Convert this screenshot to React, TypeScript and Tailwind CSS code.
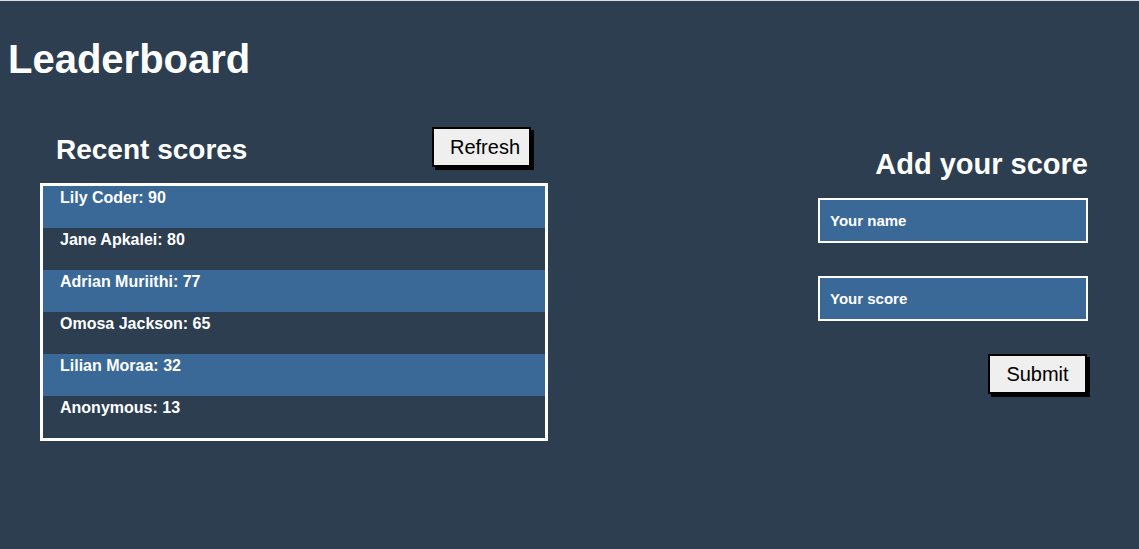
import React from 'react';

const scores = [
    { name: 'Lily Coder', score: 90 },
    { name: 'Jane Apkalei', score: 80 },
    { name: 'Adrian Muriithi', score: 77 },
    { name: 'Omosa Jackson', score: 65 },
    { name: 'Lilian Moraa', score: 32 },
    { name: 'Anonymous', score: 13 },
];

const font = { fontFamily: '"Liberation Sans", Arial, sans-serif' };

export default function App() {
    return (
        <div className="h-[549px] overflow-hidden bg-[#2c3e50] border-t border-[#dcdfe3] text-white" style={font}>
            <h1 className="ml-[8px] mt-[38px] text-[40px] leading-[40px] font-bold">Leaderboard</h1>

            <div className="mt-[48px] flex justify-between">
                {/* Recent scores */}
                <section className="ml-[40px] w-[508px]">
                    <div className="flex items-start justify-between pl-[16px] pr-[17px]">
                        <h2 className="mt-[9px] text-[28px] leading-[28px] font-bold">Recent scores</h2>
                        <button className="w-[99px] h-[40px] pl-[16px] text-left bg-[#efefef] border-2 border-black shadow-[3px_3px_0_#000] text-black text-[20px] leading-[20px]">
                            Refresh
                        </button>
                    </div>
                    <ul className="mt-[16px] border-[3px] border-white">
                        {scores.map((s, i) => (
                            <li
                                key={s.name}
                                className={`h-[42px] pl-[17px] pt-[4px] text-[16px] leading-[16px] font-bold ${i % 2 === 0 ? 'bg-[#3a6897]' : 'bg-[#2c3e50]'}`}
                            >
                                {s.name}: {s.score}
                            </li>
                        ))}
                    </ul>
                </section>

                {/* Add score */}
                <section className="mr-[51px] w-[270px] mt-[23px] flex flex-col items-end">
                    <h2 className="text-[29px] leading-[29px] font-bold">Add your score</h2>
                    <input
                        placeholder="Your name"
                        className="mt-[19px] w-[270px] h-[45px] px-[10px] bg-[#3a6897] border-2 border-white text-[15px] font-bold text-white placeholder:text-white outline-none"
                    />
                    <input
                        placeholder="Your score"
                        className="mt-[33px] w-[270px] h-[45px] px-[10px] bg-[#3a6897] border-2 border-white text-[15px] font-bold text-white placeholder:text-white outline-none"
                    />
                    <button className="mt-[33px] mr-[1px] w-[99px] h-[40px] bg-[#efefef] border-2 border-black shadow-[3px_3px_0_#000] text-black text-[20px] leading-[20px]">
                        Submit
                    </button>
                </section>
            </div>
        </div>
    );
}
